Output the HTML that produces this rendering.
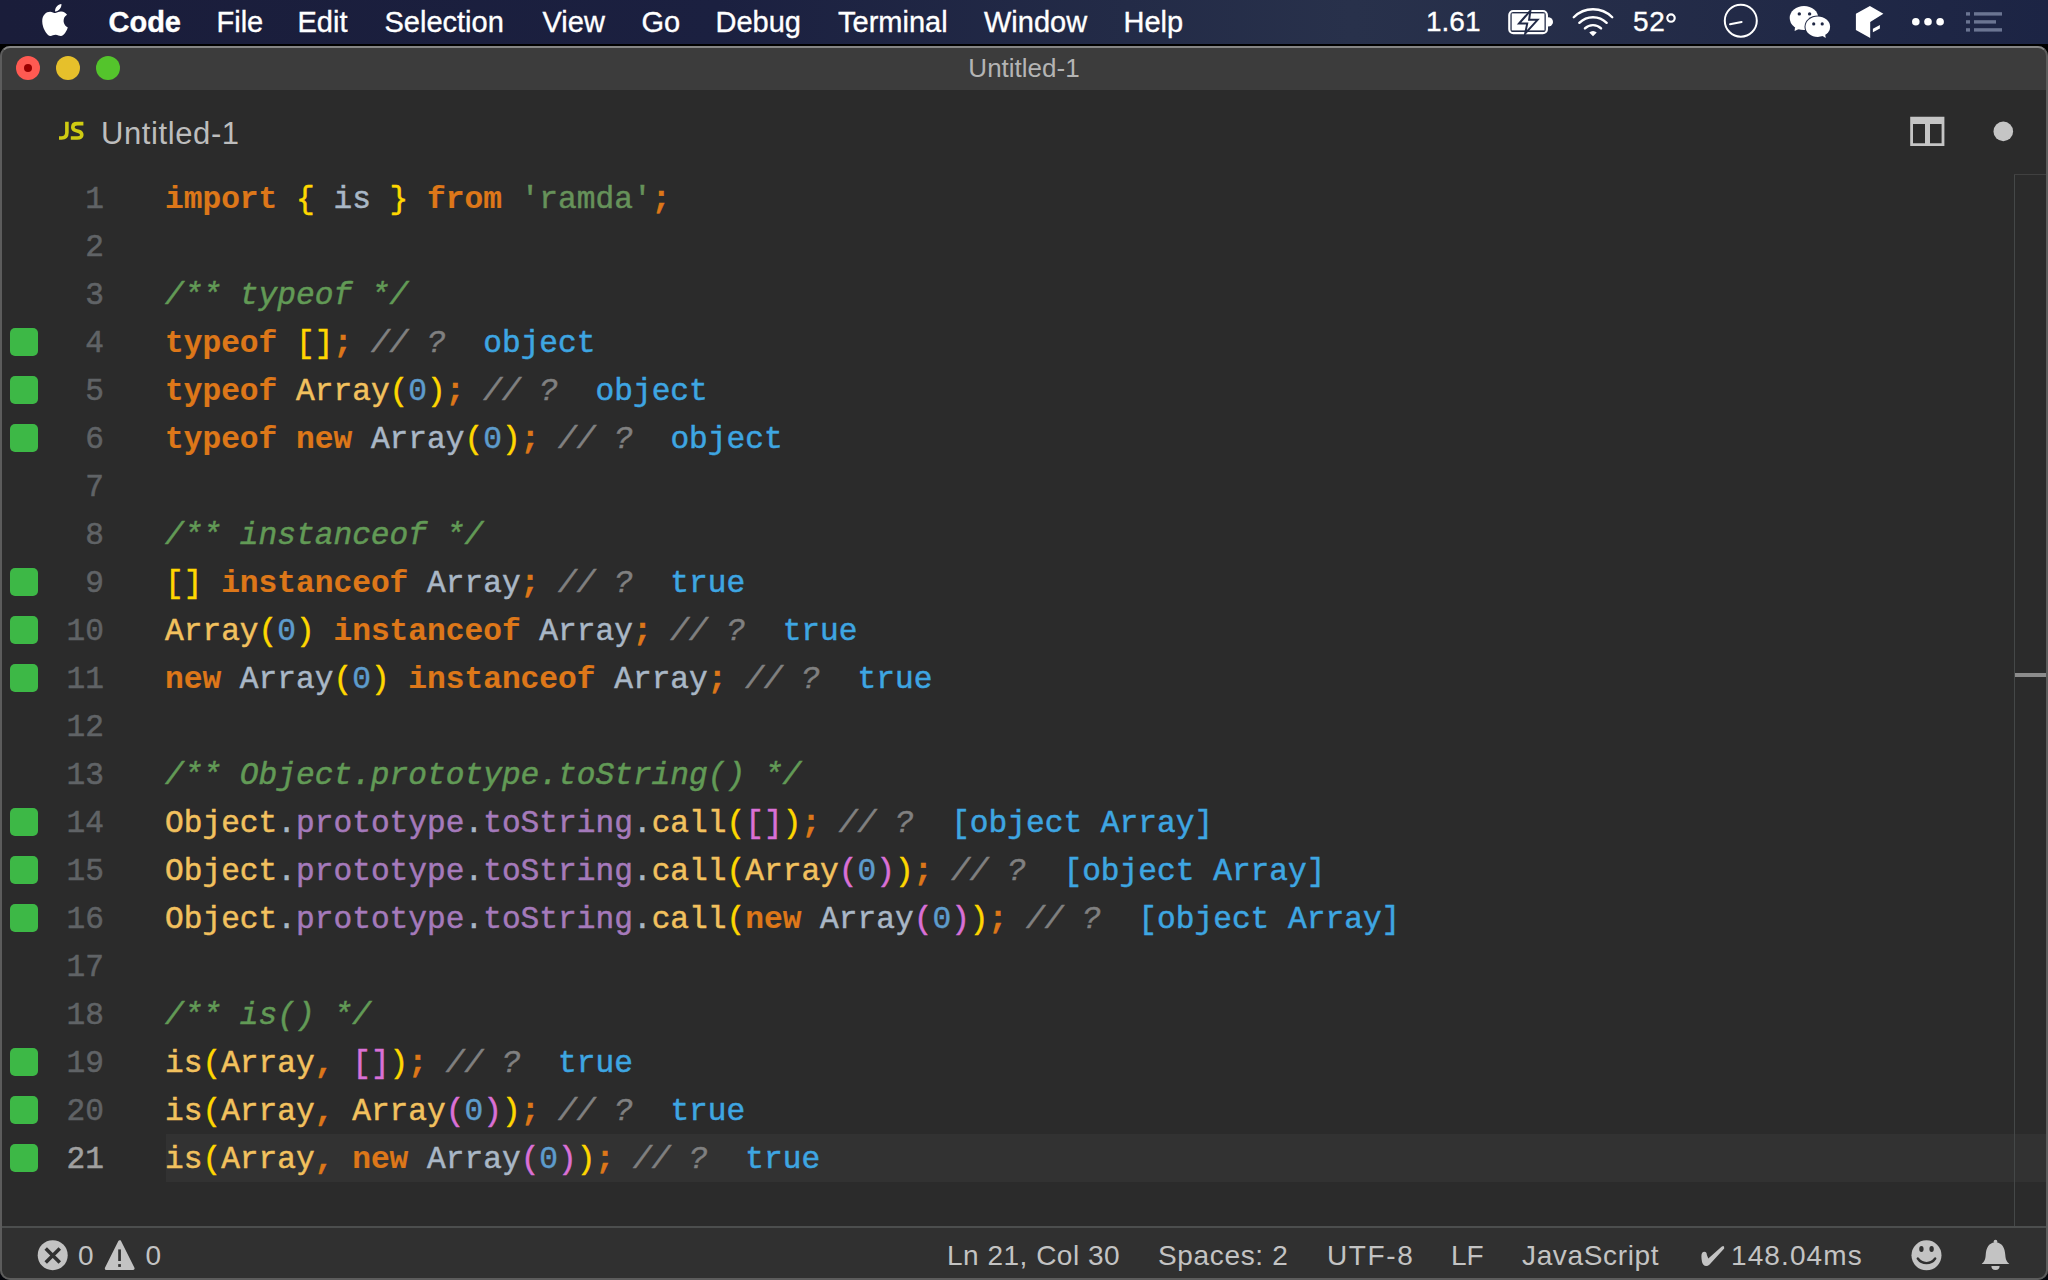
<!DOCTYPE html>
<html><head><meta charset="utf-8">
<style>
*{margin:0;padding:0;box-sizing:border-box}
html,body{width:2048px;height:1280px;overflow:hidden;background:#05060c;font-family:"Liberation Sans",sans-serif}
#menubar{position:absolute;left:0;top:0;width:2048px;height:44px;background:linear-gradient(90deg,#1a1d3a 0%,#1b2040 35%,#232b47 55%,#28314b 66%,#242c48 80%,#1c2444 100%);color:#fff;font-size:29px}
#menubar .m{position:absolute;top:5px;line-height:34px;white-space:nowrap;-webkit-text-stroke-width:0.35px}
#shadow{position:absolute;left:0;top:44px;width:2048px;height:20px;background:#000}
#win{position:absolute;left:0;top:46px;width:2048px;height:1234px;border-radius:10px;background:#2b2b2b;overflow:hidden}
#frame{position:absolute;left:0;top:46px;width:2048px;height:1234px;border:2px solid #5c5c5c;border-top-color:#858585;border-radius:10px}
#titlebar{position:absolute;left:0;top:46px;width:2048px;height:44px;background:#3c3c3c;border-radius:10px 10px 0 0}
#title{position:absolute;left:0;width:2048px;top:53px;text-align:center;color:#b4b4b4;font-size:26px;line-height:30px}
.tl{position:absolute;top:56px;width:24px;height:24px;border-radius:50%}
#editor{position:absolute;left:0;top:90px;width:2048px;height:1137px;background:#2b2b2b}
#code{position:absolute;left:0;top:0;font-family:"Liberation Mono",monospace;font-size:31.2px}
.ln{position:absolute;left:0;width:104px;text-align:right;color:#606366;-webkit-text-stroke-width:0.5px;height:48px;line-height:48px;padding-top:2px}
.ln.cur{color:#a0a0a0}
.cl{position:absolute;left:165px;-webkit-text-stroke-width:0.5px;height:48px;line-height:48px;white-space:pre;color:#a9b7c6;padding-top:2px}
.gq{position:absolute;left:10px;width:28px;height:28px;border-radius:5px;background:#3db846}
#curline{position:absolute;left:166px;top:1134px;width:1880px;height:48px;background:#323232}
.k{color:#dd7719;font-weight:bold;-webkit-text-stroke-width:0.2px}
.y{color:#ffd700}
.o{color:#da70d6}
.s{color:#66925a}
.dc{color:#629a56;font-style:italic}
.c{color:#808080;font-style:italic}
.v{color:#3ea6e2}
.f{color:#f2c15e}
.p{color:#a57abb}
.n{color:#5d9ccc}
.sc{color:#dd7719;font-weight:bold}
#status{position:absolute;left:0;top:1226px;width:2048px;height:54px;background:#303030;border-top:2px solid #4c4e4e;border-radius:0 0 10px 10px}
.st{position:absolute;top:1240px;line-height:32px;white-space:nowrap;color:#c3c3c3;font-size:28px}
</style></head><body>
<div id="menubar">
<svg style="position:absolute;left:0;top:0" width="2048" height="44">
<path fill="#fff" transform="translate(41.95,1.6) scale(0.068,0.0715)" d="M318.7 268.7c-.2-36.7 16.4-64.4 50-84.8-18.8-26.9-47.2-41.7-84.7-44.6-35.5-2.8-74.3 20.7-88.5 20.7-15 0-49.4-19.700-76.4-19.7C63.3 141.2 4 184.8 4 273.5q0 39.3 14.4 81.2c12.8 36.7 59 126.7 107.2 125.2 25.2-.6 43-17.9 75.8-17.9 31.8 0 48.3 17.9 76.4 17.9 48.6-.7 90.4-82.5 102.6-119.3-65.2-30.7-61.7-90-61.7-91.9zm-56.6-164.2c27.3-32.4 24.8-61.9 24-72.5-24.1 1.4-52 16.4-67.9 34.9-17.5 19.8-27.8 44.3-25.6 71.9 26.1 2 49.9-11.4 69.5-34.3z"/>
<!-- battery -->
<rect x="1509.3" y="11" width="37.6" height="22.2" rx="4" fill="none" stroke="#fff" stroke-width="2.2"/>
<rect x="1511.7" y="13.4" width="32.8" height="17" fill="#fff"/>
<path d="M1548 17.2 a5 4.7 0 0 1 0 9.4z" fill="#fff"/>
<path d="M1530.4 10.6 L1519 23.6 L1527.2 23.6 L1525.2 33.4 L1537.6 19.8 L1529.1 19.8 Z" fill="#fff" stroke="#222a47" stroke-width="2" stroke-linejoin="miter"/>
<!-- wifi -->
<g fill="none" stroke="#fff" stroke-width="2.4" stroke-linecap="round">
<path d="M1573.77 17.27 A27.2 27.2 0 0 1 1612.23 17.27"/>
<path d="M1579.35 22.85 A19.3 19.3 0 0 1 1606.65 22.85"/>
<path d="M1584.94 28.44 A11.4 11.4 0 0 1 1601.06 28.44"/>
</g>
<path d="M1593 36.3 L1589.25 32.55 A5.3 5.3 0 0 1 1596.75 32.55 Z" fill="#fff"/>
<circle cx="1671" cy="18.05" r="3.7" fill="none" stroke="#fff" stroke-width="2.2"/>
<!-- clock -->
<circle cx="1740.8" cy="20.7" r="16" fill="none" stroke="#fff" stroke-width="2"/>
<path d="M1730 24.3 L1741.6 21.9" stroke="#fff" stroke-width="2" stroke-linecap="round"/>
<!-- wechat -->
<ellipse cx="1804" cy="17.9" rx="14.3" ry="12" fill="#fff"/>
<path d="M1795 27 L1794.6 31 L1800 28.5Z" fill="#fff"/>
<ellipse cx="1817.8" cy="26.7" rx="13.3" ry="11.3" fill="#1f2744"/>
<ellipse cx="1817.8" cy="26.7" rx="12.3" ry="10.3" fill="#fff"/>
<path d="M1821 35 L1825.7 38.1 L1825 33Z" fill="#fff"/>
<circle cx="1799.3" cy="13.9" r="1.7" fill="#1f2744"/><circle cx="1809.6" cy="13.9" r="1.7" fill="#1f2744"/>
<circle cx="1813.7" cy="23.9" r="1.6" fill="#1f2744"/><circle cx="1822.2" cy="23.9" r="1.6" fill="#1f2744"/>
<!-- cube -->
<path d="M1869.9 5.9 L1883.4 13.8 L1870.2 22 L1870.2 38.1 L1855.9 29.9 L1855.9 13.8Z" fill="#fff"/>
<path d="M1872.9 28.7 L1879.9 25 L1879.9 28.5 L1872.9 32.2Z" fill="#fff"/>
<!-- dots -->
<circle cx="1915.8" cy="21.75" r="3.8" fill="#fff"/><circle cx="1928" cy="21.75" r="3.8" fill="#fff"/><circle cx="1940.1" cy="21.75" r="3.8" fill="#fff"/>
<!-- list -->
<g fill="#6b7592">
<rect x="1966" y="12.2" width="4" height="3.4"/><rect x="1974" y="12.2" width="28" height="3.4"/>
<rect x="1966" y="20.2" width="4" height="3.4"/><rect x="1974" y="20.2" width="22" height="3.4"/>
<rect x="1966" y="28.2" width="4" height="3.4"/><rect x="1974" y="28.2" width="28" height="3.4"/>
</g>
</svg>
<div class="m" style="left:108.5px;font-weight:bold">Code</div>
<div class="m" style="left:216.5px">File</div>
<div class="m" style="left:297.5px">Edit</div>
<div class="m" style="left:384.5px">Selection</div>
<div class="m" style="left:542.5px">View</div>
<div class="m" style="left:641.5px">Go</div>
<div class="m" style="left:715.5px">Debug</div>
<div class="m" style="left:838px">Terminal</div>
<div class="m" style="left:984px">Window</div>
<div class="m" style="left:1123.5px">Help</div>
<div class="m" style="left:1426px;font-size:28px">1.61</div>
<div class="m" style="left:1633px;font-size:28px;letter-spacing:0.6px">52</div>
</div>
<div id="shadow"></div>
<div id="win"></div>
<div id="titlebar"></div>
<div class="tl" style="left:16px;background:#ff5a52"><div style="position:absolute;left:8px;top:8px;width:8px;height:8px;border-radius:50%;background:#990000"></div></div>
<div class="tl" style="left:56px;background:#e6c02b"></div>
<div class="tl" style="left:96px;background:#54c42c"></div>
<div id="title">Untitled-1</div>
<div id="editor"></div>
<div id="curline"></div>
<svg style="position:absolute;left:50px;top:110px" width="45" height="40"><g transform="translate(-50,-110)" fill="none" stroke="#cfcb12" stroke-width="3.6"><path d="M66.9 121.8 V132.5 Q66.9 138 61.5 138 H59"/><path d="M83.4 123.6 H77.2 Q72.8 123.6 72.8 127.2 Q72.8 129.6 76 130.6 L79 131.5 Q81.8 132.5 81.8 135 Q81.6 138 77.2 138 H70.8"/></g></svg>
<div style="position:absolute;left:101px;top:116px;color:#bdbdbd;font-size:31px;line-height:36px;letter-spacing:0.6px">Untitled-1</div>
<svg style="position:absolute;left:1900px;top:105px" width="130" height="50">
<path fill="#c5c5c5" fill-rule="evenodd" d="M10.2 11.8 H44.4 V41.1 H10.2 Z M13 19 V38.3 H25 V19 Z M30 19 V38.3 H41.6 V19 Z"/>
<circle cx="103.3" cy="26.4" r="9.8" fill="#c5c5c5"/>
</svg>
<div style="position:absolute;left:2014px;top:174px;width:1px;height:1053px;background:#454848"></div>
<div style="position:absolute;left:2014px;top:174px;width:34px;height:1px;background:#404040"></div>
<div style="position:absolute;left:2015px;top:673px;width:33px;height:4px;background:#8c8c8c"></div>
<div id="code">
<div class="ln" style="top:174px">1</div>
<div class="cl" style="top:174px"><span class="k">import</span> <span class="y">{</span> is <span class="y">}</span> <span class="k">from</span> <span class="s">'ramda'</span><span class="sc">;</span></div>
<div class="ln" style="top:222px">2</div>
<div class="cl" style="top:222px"></div>
<div class="ln" style="top:270px">3</div>
<div class="cl" style="top:270px"><span class="dc">/** typeof */</span></div>
<div class="gq" style="top:328px"></div>
<div class="ln" style="top:318px">4</div>
<div class="cl" style="top:318px"><span class="k">typeof</span> <span class="y">[]</span><span class="sc">;</span> <span class="c">// ?</span>  <span class="v">object</span></div>
<div class="gq" style="top:376px"></div>
<div class="ln" style="top:366px">5</div>
<div class="cl" style="top:366px"><span class="k">typeof</span> <span class="f">Array</span><span class="y">(</span><span class="n">0</span><span class="y">)</span><span class="sc">;</span> <span class="c">// ?</span>  <span class="v">object</span></div>
<div class="gq" style="top:424px"></div>
<div class="ln" style="top:414px">6</div>
<div class="cl" style="top:414px"><span class="k">typeof</span> <span class="k">new</span> Array<span class="y">(</span><span class="n">0</span><span class="y">)</span><span class="sc">;</span> <span class="c">// ?</span>  <span class="v">object</span></div>
<div class="ln" style="top:462px">7</div>
<div class="cl" style="top:462px"></div>
<div class="ln" style="top:510px">8</div>
<div class="cl" style="top:510px"><span class="dc">/** instanceof */</span></div>
<div class="gq" style="top:568px"></div>
<div class="ln" style="top:558px">9</div>
<div class="cl" style="top:558px"><span class="y">[]</span> <span class="k">instanceof</span> Array<span class="sc">;</span> <span class="c">// ?</span>  <span class="v">true</span></div>
<div class="gq" style="top:616px"></div>
<div class="ln" style="top:606px">10</div>
<div class="cl" style="top:606px"><span class="f">Array</span><span class="y">(</span><span class="n">0</span><span class="y">)</span> <span class="k">instanceof</span> Array<span class="sc">;</span> <span class="c">// ?</span>  <span class="v">true</span></div>
<div class="gq" style="top:664px"></div>
<div class="ln" style="top:654px">11</div>
<div class="cl" style="top:654px"><span class="k">new</span> Array<span class="y">(</span><span class="n">0</span><span class="y">)</span> <span class="k">instanceof</span> Array<span class="sc">;</span> <span class="c">// ?</span>  <span class="v">true</span></div>
<div class="ln" style="top:702px">12</div>
<div class="cl" style="top:702px"></div>
<div class="ln" style="top:750px">13</div>
<div class="cl" style="top:750px"><span class="dc">/** Object.prototype.toString() */</span></div>
<div class="gq" style="top:808px"></div>
<div class="ln" style="top:798px">14</div>
<div class="cl" style="top:798px"><span class="f">Object</span>.<span class="p">prototype</span>.<span class="p">toString</span>.<span class="f">call</span><span class="y">(</span><span class="o">[]</span><span class="y">)</span><span class="sc">;</span> <span class="c">// ?</span>  <span class="v">[object Array]</span></div>
<div class="gq" style="top:856px"></div>
<div class="ln" style="top:846px">15</div>
<div class="cl" style="top:846px"><span class="f">Object</span>.<span class="p">prototype</span>.<span class="p">toString</span>.<span class="f">call</span><span class="y">(</span><span class="f">Array</span><span class="o">(</span><span class="n">0</span><span class="o">)</span><span class="y">)</span><span class="sc">;</span> <span class="c">// ?</span>  <span class="v">[object Array]</span></div>
<div class="gq" style="top:904px"></div>
<div class="ln" style="top:894px">16</div>
<div class="cl" style="top:894px"><span class="f">Object</span>.<span class="p">prototype</span>.<span class="p">toString</span>.<span class="f">call</span><span class="y">(</span><span class="k">new</span> Array<span class="o">(</span><span class="n">0</span><span class="o">)</span><span class="y">)</span><span class="sc">;</span> <span class="c">// ?</span>  <span class="v">[object Array]</span></div>
<div class="ln" style="top:942px">17</div>
<div class="cl" style="top:942px"></div>
<div class="ln" style="top:990px">18</div>
<div class="cl" style="top:990px"><span class="dc">/** is() */</span></div>
<div class="gq" style="top:1048px"></div>
<div class="ln" style="top:1038px">19</div>
<div class="cl" style="top:1038px"><span class="f">is</span><span class="y">(</span><span class="f">Array</span><span class="sc">,</span> <span class="o">[]</span><span class="y">)</span><span class="sc">;</span> <span class="c">// ?</span>  <span class="v">true</span></div>
<div class="gq" style="top:1096px"></div>
<div class="ln" style="top:1086px">20</div>
<div class="cl" style="top:1086px"><span class="f">is</span><span class="y">(</span><span class="f">Array</span><span class="sc">,</span> <span class="f">Array</span><span class="o">(</span><span class="n">0</span><span class="o">)</span><span class="y">)</span><span class="sc">;</span> <span class="c">// ?</span>  <span class="v">true</span></div>
<div class="gq" style="top:1144px"></div>
<div class="ln cur" style="top:1134px">21</div>
<div class="cl" style="top:1134px"><span class="f">is</span><span class="y">(</span><span class="f">Array</span><span class="sc">,</span> <span class="k">new</span> Array<span class="o">(</span><span class="n">0</span><span class="o">)</span><span class="y">)</span><span class="sc">;</span> <span class="c">// ?</span>  <span class="v">true</span></div>
</div>
<div id="status"></div>
<svg style="position:absolute;left:0;top:1227px" width="2048" height="53">
<circle cx="52.7" cy="28.2" r="15" fill="#c3c3c3"/>
<path d="M45.7 21.4 L59.8 35.5 M59.8 21.4 L45.7 35.5" stroke="#303030" stroke-width="3.5"/>
<path d="M119.7 14.7 L133.1 41.4 H106.3 Z" fill="#c3c3c3" stroke="#c3c3c3" stroke-width="3" stroke-linejoin="round"/>
<rect x="118.2" y="22.4" width="2.7" height="11.6" fill="#303030"/><rect x="118.2" y="37.1" width="2.7" height="2.8" fill="#303030"/>
<circle cx="1926.5" cy="28.3" r="15" fill="#c3c3c3"/>
<ellipse cx="1921.4" cy="22" rx="2.2" ry="2.9" fill="#303030"/><ellipse cx="1931.6" cy="22" rx="2.2" ry="2.9" fill="#303030"/>
<path d="M1917.8 31.5 A10.5 10.5 0 0 0 1935.2 31.5" fill="none" stroke="#303030" stroke-width="2.4" stroke-linecap="round"/>
<circle cx="1995.5" cy="14.6" r="1.8" fill="#c3c3c3"/><path d="M1995.5 15.3 C2002.2 15.6 2004.9 21 2005.3 28 C2005.6 32.6 2006.6 34.6 2009.3 36.9 H1981.7 C1984.4 34.6 1985.4 32.6 1985.7 28 C1986.1 21 1988.8 15.6 1995.5 15.3Z" fill="#c3c3c3"/>
<path d="M1991.4 39 A4.1 4.1 0 0 0 1999.6 39Z" fill="#c3c3c3"/>
</svg>
<div class="st" style="left:78px">0</div>
<div class="st" style="left:145.5px">0</div>
<div class="st" style="left:947px;letter-spacing:0.5px">Ln 21, Col 30</div>
<div class="st" style="left:1158px;letter-spacing:0.65px">Spaces: 2</div>
<div class="st" style="left:1327px;letter-spacing:1.6px">UTF-8</div>
<div class="st" style="left:1451px">LF</div>
<div class="st" style="left:1522px;letter-spacing:0.65px">JavaScript</div>
<svg style="position:absolute;left:1690px;top:1238px" width="40" height="34"><path fill="#c3c3c3" transform="translate(-1690,-1238)" d="M1701.4 1256.5 Q1701.2 1252 1704.5 1251.8 Q1706.6 1251.8 1706.9 1255 L1708.3 1258.4 L1721.5 1246.8 Q1724.6 1244.6 1724.2 1248.6 L1709.6 1264.6 Q1706 1267.6 1703.2 1264.6 Q1701.6 1262.5 1701.4 1256.5Z"/></svg>
<div class="st" style="left:1731px;letter-spacing:1.1px">148.04ms</div>
<div id="frame"></div>
</body></html>
